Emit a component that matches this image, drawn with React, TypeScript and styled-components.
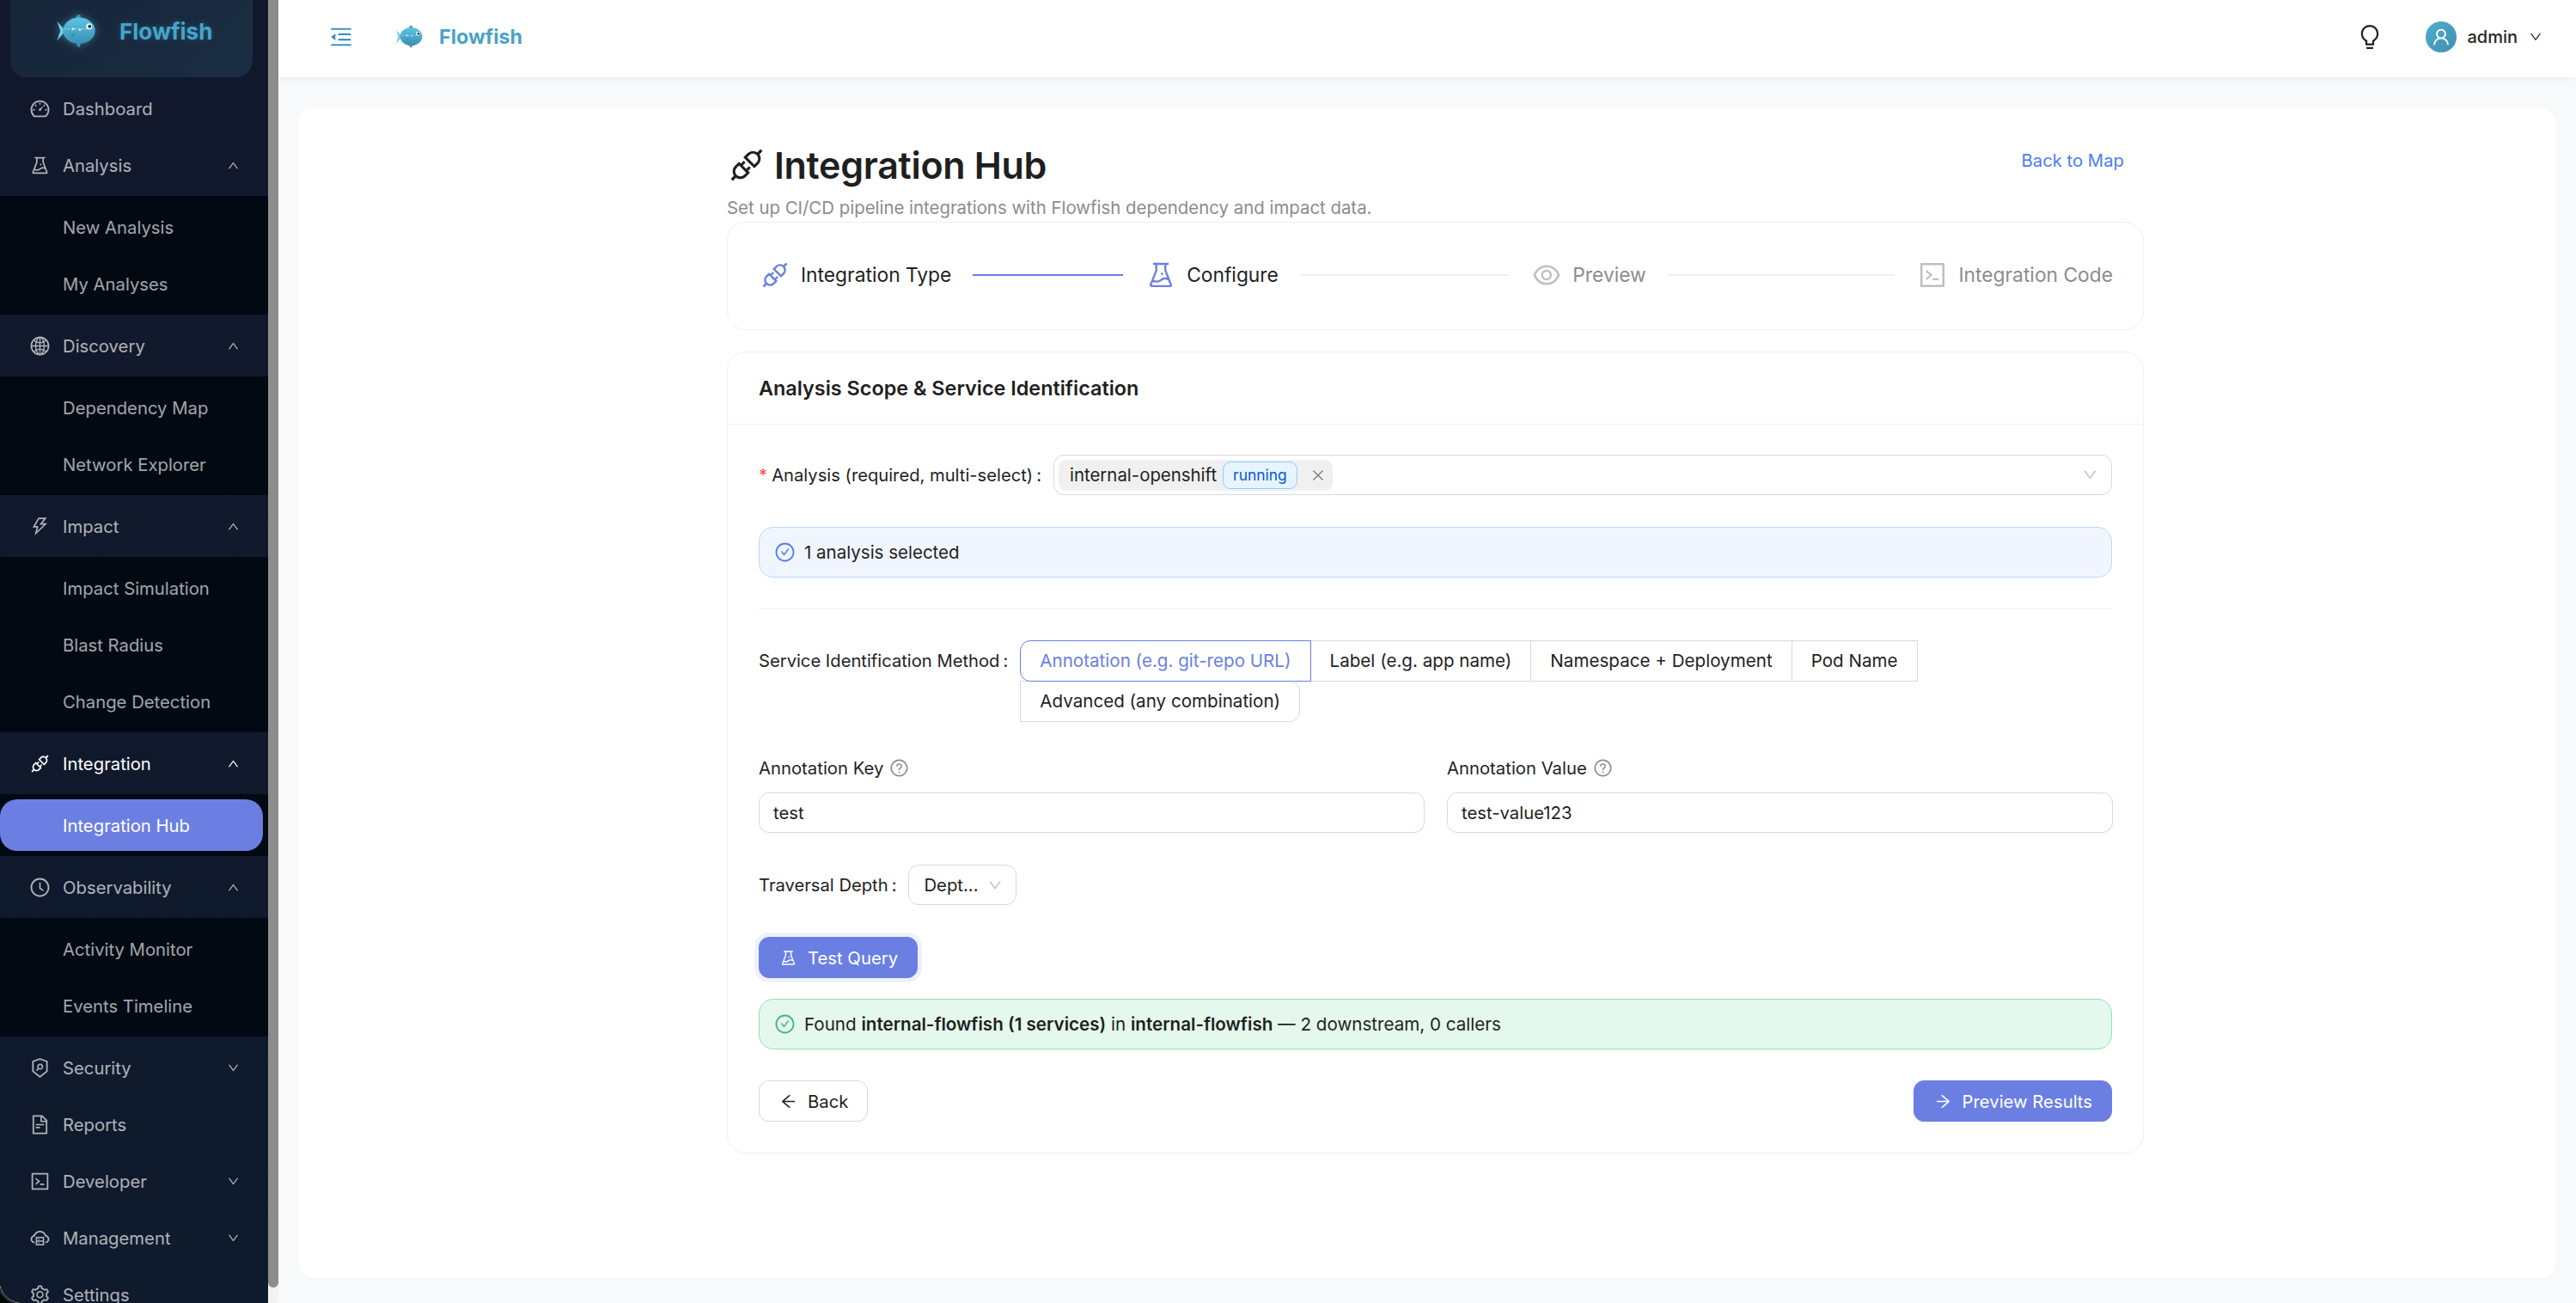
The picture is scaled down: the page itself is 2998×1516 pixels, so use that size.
import React from 'react';
import styled, { createGlobalStyle } from 'styled-components';
import {
  AiOutlineApi,
  AiOutlineArrowLeft,
  AiOutlineArrowRight,
  AiOutlineBulb,
  AiOutlineCheckCircle,
  AiOutlineClockCircle,
  AiOutlineClose,
  AiOutlineCloudServer,
  AiOutlineCode,
  AiOutlineDashboard,
  AiOutlineDown,
  AiOutlineExperiment,
  AiOutlineEye,
  AiOutlineFileText,
  AiOutlineGlobal,
  AiOutlineMenuFold,
  AiOutlineQuestionCircle,
  AiOutlineSecurityScan,
  AiOutlineSetting,
  AiOutlineThunderbolt,
  AiOutlineUp,
  AiOutlineUser,
} from 'react-icons/ai';

const GlobalStyle = createGlobalStyle`
  html, body {
    margin: 0;
    padding: 0;
    height: 100%;
    overflow: hidden;
    background: #f8f9fb;
    font-family: Inter, "Liberation Sans", sans-serif;
    color: #1f1f1f;
  }
  * {
    box-sizing: border-box;
  }
`;

const Shell = styled.div`
  position: relative;
  display: flex;
  height: 100vh;
  overflow: hidden;
`;

const SideColumn = styled.aside`
  display: flex;
  flex: none;
  width: 324px;
  height: 100%;
`;

const SideNav = styled.nav`
  width: 312px;
  height: 100%;
  overflow: hidden;
  background: linear-gradient(180deg, #12182b 0%, #0f1a2d 100%);
`;

const ScrollTrack = styled.div`
  width: 12px;
  height: 100%;
  background: #f2f2f2;
`;

const ScrollThumb = styled.div`
  height: 1498px;
  background: #8c8c8c;
  border-radius: 0 0 6px 6px;
`;

const WindowCorner = styled.svg`
  position: absolute;
  left: 0;
  bottom: 0;
  width: 24px;
  height: 24px;
`;

const Brand = styled.div`
  display: flex;
  align-items: center;
  height: 120px;
  margin: -30px 18px 0 12px;
  padding: 12px 0 0 53px;
  gap: 26px;
  background: linear-gradient(135deg, #172538, #1a2d42);
  border-radius: 20px;
`;

const BrandName = styled.span`
  font-size: 26px;
  font-weight: 700;
  color: #45a5cb;
  text-shadow: 0 0 7px rgba(69, 165, 203, 0.35);
`;

const MenuList = styled.div`
  padding-top: 6px;
`;

const MenuRow = styled.div<{ $active?: boolean }>`
  display: flex;
  align-items: center;
  height: 60px;
  margin-bottom: 6px;
  padding: 0 33px 0 34px;
  font-size: 20.3px;
  color: ${({ $active }) => ($active ? '#ffffff' : 'rgba(255, 255, 255, 0.68)')};

  & > svg:first-child {
    flex: none;
    width: 25px;
    height: 25px;
    margin-right: 14px;
  }
`;

const MenuLabel = styled.span`
  flex: 1;
`;

const Chevron = styled.span`
  display: flex;
  font-size: 15px;
`;

const SubGroup = styled.div`
  display: flex;
  flex-direction: column;
  gap: 6px;
  margin-bottom: 6px;
  padding: 6px 0;
  background: #020913;
`;

const SubRow = styled.div<{ $active?: boolean }>`
  display: flex;
  align-items: center;
  height: 60px;
  margin-right: 6px;
  padding-left: 73px;
  font-size: 20.3px;
  border-radius: 20px;
  background: ${({ $active }) => ($active ? '#6b7fe3' : 'transparent')};
  color: ${({ $active }) => ($active ? '#ffffff' : 'rgba(255, 255, 255, 0.65)')};
`;

const MainColumn = styled.div`
  display: flex;
  flex: 1;
  flex-direction: column;
  min-width: 0;
`;

const TopBar = styled.header`
  display: flex;
  flex: none;
  align-items: center;
  height: 90px;
  padding: 0 39px 5px 58px;
  background: #ffffff;
  box-shadow: 0 1px 6px rgba(0, 0, 0, 0.07);
`;

const FoldIcon = styled.span`
  display: flex;
  margin-right: 48px;
  font-size: 30px;
  color: #3f94b8;
`;

const TopBrandName = styled.span`
  margin-left: 18px;
  font-size: 23.3px;
  font-weight: 700;
  color: #4aa2c7;
`;

const Spacer = styled.div`
  flex: 1;
`;

const BulbIcon = styled.span`
  display: flex;
  margin-right: 49px;
  font-size: 32px;
  color: #222222;
`;

const Avatar = styled.span`
  display: flex;
  align-items: center;
  justify-content: center;
  width: 36px;
  height: 36px;
  margin-right: 12px;
  border-radius: 50%;
  background: linear-gradient(135deg, #52adcd, #3f8fb2);
  color: #ffffff;
  font-size: 24px;
`;

const UserName = styled.span`
  margin-right: 13px;
  font-size: 20px;
  font-weight: 500;
  color: #262626;
`;

const UserChevron = styled.span`
  display: flex;
  font-size: 16px;
  color: #262626;
`;

const ContentArea = styled.main`
  flex: 1;
  margin: 36px 24px 30px 24px;
  padding: 0 479px 0 498px;
  background: #ffffff;
  border-radius: 16px;
`;

const PageHead = styled.div`
  display: flex;
  align-items: flex-start;
  justify-content: space-between;
  height: 132px;
  padding-top: 37px;
`;

const PageTitle = styled.h1`
  display: flex;
  align-items: center;
  gap: 9px;
  margin: 0;
  font-size: 43px;
  line-height: 58px;
  font-weight: 600;
  letter-spacing: -0.3px;
  color: #1f1f1f;

  svg {
    width: 46px;
    height: 46px;
  }
`;

const PageSubtitle = styled.p`
  margin: 6px 0 0;
  font-size: 20.4px;
  line-height: 30px;
  color: #8c8c8c;
`;

const BackLink = styled.a`
  margin: 9px 23px 0 0;
  font-size: 20.3px;
  line-height: 30px;
  color: #4c7cf0;
`;

const Panel = styled.section`
  background: #ffffff;
  border: 1px solid #f0f0f0;
  border-radius: 22px;
`;

const StepperPanel = styled(Panel)`
  display: flex;
  align-items: center;
  height: 126px;
  margin-bottom: 25px;
  padding: 0 35px 2px 37px;
`;

const Step = styled.div<{ $last?: boolean }>`
  display: flex;
  flex: ${({ $last }) => ($last ? 'none' : '1')};
  align-items: center;
`;

const StepIcon = styled.span<{ $on: boolean }>`
  display: flex;
  margin-right: 12px;
  font-size: 36px;
  color: ${({ $on }) => ($on ? '#6b7fe3' : '#bfbfbf')};
`;

const StepTitle = styled.span<{ $on: boolean }>`
  font-size: 22.8px;
  line-height: 34px;
  color: ${({ $on }) => ($on ? '#1f1f1f' : '#8c8c8c')};
`;

const StepLine = styled.span<{ $on: boolean }>`
  flex: 1;
  height: 2px;
  margin: 0 26px 0 25px;
  background: ${({ $on }) => ($on ? '#6b7fe3' : '#f0f0f0')};
`;

const PanelHead = styled.div`
  display: flex;
  align-items: center;
  height: 84px;
  padding: 0 36px;
  border-bottom: 1px solid #f0f0f0;
  font-size: 23.4px;
  font-weight: 600;
  color: #1f1f1f;
`;

const PanelBody = styled.div`
  padding: 35px 36px 36px;
`;

const FormRow = styled.div<{ $gap?: number }>`
  display: flex;
  align-items: flex-start;
  margin-bottom: ${({ $gap }) => $gap ?? 37}px;
`;

const FieldLabel = styled.label`
  flex: none;
  height: 47px;
  margin-right: 14px;
  font-size: 20.2px;
  line-height: 47px;
  color: #1f1f1f;
`;

const Colon = styled.span`
  margin-left: 4px;
`;

const Required = styled.span`
  margin-right: 5px;
  color: #ff4d4f;
`;

const MultiSelect = styled.div`
  display: flex;
  flex: 1;
  align-items: center;
  justify-content: space-between;
  height: 47px;
  padding: 0 15px 0 5px;
  border: 1px solid #d9d9d9;
  border-radius: 12px;
  color: #bfbfbf;
  font-size: 19px;
`;

const Chip = styled.span`
  display: flex;
  align-items: center;
  height: 36px;
  padding: 0 8px 0 13px;
  border-radius: 9px;
  background: #f0f0f0;
  font-size: 20.4px;
  color: #1f1f1f;
`;

const StatusTag = styled.span`
  display: flex;
  align-items: center;
  height: 32px;
  margin: 0 15px 0 7px;
  padding: 0 11px;
  border: 1px solid #91caff;
  border-radius: 9px;
  background: #e6f4ff;
  font-size: 17.4px;
  color: #0958d9;
`;

const ChipClose = styled.span`
  display: flex;
  font-size: 18px;
  color: #7f7f7f;
`;

const Notice = styled.div<{ $tone: 'info' | 'success' }>`
  display: flex;
  align-items: center;
  height: 59px;
  padding: 0 17px;
  border: 1px solid ${({ $tone }) => ($tone === 'info' ? '#bcd7fa' : '#92e0b5')};
  border-radius: 17px;
  background: ${({ $tone }) => ($tone === 'info' ? '#f1f6fe' : '#e4f8ed')};
  font-size: 20.5px;
  color: #1f1f1f;

  svg {
    flex: none;
    width: 25px;
    height: 25px;
    margin-right: 10px;
    color: ${({ $tone }) => ($tone === 'info' ? '#4c7cf0' : '#45b585')};
  }

  b {
    font-weight: 600;
  }
`;

const InfoNotice = styled(Notice)`
  margin-bottom: 36px;
`;

const SuccessNotice = styled(Notice)`
  margin-bottom: 36px;
  font-size: 20.6px;
`;

const Divider = styled.hr`
  height: 1px;
  margin: 0 0 36px;
  border: 0;
  background: #f0f0f0;
`;

const RadioGroup = styled.div`
  display: flex;
  flex-wrap: wrap;
  width: 1060px;
`;

const RadioOption = styled.span<{ $on?: boolean; $shape?: 'first' | 'last' }>`
  position: relative;
  z-index: ${({ $on }) => ($on ? 1 : 0)};
  height: 48px;
  margin: 0 -1px -1px 0;
  padding: 0 22px;
  border: 1px solid ${({ $on }) => ($on ? '#6b7fe3' : '#d9d9d9')};
  border-radius: ${({ $shape }) =>
    $shape === 'first' ? '12px 0 0 12px' : $shape === 'last' ? '0 12px 12px 0' : '0'};
  background: #ffffff;
  font-size: 20.6px;
  line-height: 46px;
  white-space: nowrap;
  color: ${({ $on }) => ($on ? '#6b7fe3' : '#1f1f1f')};
`;

const TwoColumns = styled.div`
  display: grid;
  grid-template-columns: 775px 775px;
  gap: 26px;
  margin: 41px 0 37px;
`;

const StackedLabel = styled.div`
  display: flex;
  align-items: center;
  gap: 7px;
  height: 28px;
  margin-bottom: 14px;
  padding-bottom: 2px;
  font-size: 20.3px;
  color: #1f1f1f;

  svg {
    color: #8c8c8c;
    font-size: 23px;
  }
`;

const TextInput = styled.div`
  display: flex;
  align-items: center;
  height: 47px;
  padding: 0 16px;
  border: 1px solid #d9d9d9;
  border-radius: 12px;
  font-size: 20.3px;
  color: #1f1f1f;
`;

const DepthSelect = styled.div`
  display: flex;
  align-items: center;
  justify-content: space-between;
  width: 126px;
  height: 47px;
  padding: 0 15px 0 17px;
  border: 1px solid #d9d9d9;
  border-radius: 12px;
  font-size: 20.3px;
  color: #1f1f1f;

  svg {
    font-size: 18px;
    color: #bfbfbf;
  }
`;

const Button = styled.button<{ $primary?: boolean; $halo?: boolean }>`
  display: inline-flex;
  align-items: center;
  gap: 12px;
  height: 48px;
  padding: 0 22px 0 23px;
  border: 1px solid ${({ $primary }) => ($primary ? '#6b7fe3' : '#d9d9d9')};
  border-radius: 12px;
  background: ${({ $primary }) => ($primary ? '#6b7fe3' : '#ffffff')};
  color: ${({ $primary }) => ($primary ? '#ffffff' : '#1f1f1f')};
  font-family: inherit;
  font-size: 20.3px;
  box-shadow: ${({ $halo }) =>
    $halo ? '0 0 0 5px #eef1fd' : '0 2px 0 rgba(0, 0, 0, 0.02)'};

  svg {
    font-size: 21px;
  }
`;

const TestRow = styled.div`
  margin-bottom: 24px;
`;

const ActionRow = styled.div`
  display: flex;
  justify-content: space-between;
`;

const FishLogo: React.FC<{ size: number; id: string; glow?: boolean }> = ({ size, id, glow }) => (
  <svg
    width={size}
    height={size * 0.82}
    viewBox="0 0 48 40"
    style={glow ? { filter: 'drop-shadow(0 0 5px rgba(75, 175, 215, 0.55))' } : undefined}
  >
    <defs>
      <linearGradient id={id} x1="0" y1="0" x2="0" y2="1">
        <stop offset="0" stopColor="#5cc4e2" />
        <stop offset="1" stopColor="#3a8fb4" />
      </linearGradient>
    </defs>
    <path d="M23 5 C24 1 27 0 29 2 L29 6 Z" fill="#3f93b7" />
    <path d="M24 34 C24 38 26 40 28 39 L29 34 Z" fill="#3f93b7" />
    <path d="M11 20 L1 9 L5 20 L1 32 Z" fill="#6fcde8" />
    <ellipse cx="27" cy="20" rx="19" ry="15.5" fill={`url(#${id})`} />
    <path d="M10 18 H38" stroke="#cfeef8" strokeWidth="0.9" strokeDasharray="2 2" fill="none" />
    <circle cx="20" cy="18" r="1.4" fill="#d8f2fa" />
    <circle cx="28" cy="19" r="1.2" fill="#d8f2fa" />
    <path d="M18 27 L22 23" stroke="#2f7fa3" strokeWidth="1.4" />
    <circle cx="39" cy="15" r="3.6" fill="#ffffff" />
    <circle cx="39.6" cy="15" r="2" fill="#17384a" />
  </svg>
);

type SubItem = { label: string; active?: boolean };
type NavItem = {
  label: string;
  icon: React.ReactNode;
  open?: boolean;
  closed?: boolean;
  active?: boolean;
  children?: SubItem[];
};

const navItems: NavItem[] = [
  { label: 'Dashboard', icon: <AiOutlineDashboard /> },
  {
    label: 'Analysis',
    icon: <AiOutlineExperiment />,
    open: true,
    children: [{ label: 'New Analysis' }, { label: 'My Analyses' }],
  },
  {
    label: 'Discovery',
    icon: <AiOutlineGlobal />,
    open: true,
    children: [{ label: 'Dependency Map' }, { label: 'Network Explorer' }],
  },
  {
    label: 'Impact',
    icon: <AiOutlineThunderbolt />,
    open: true,
    children: [{ label: 'Impact Simulation' }, { label: 'Blast Radius' }, { label: 'Change Detection' }],
  },
  {
    label: 'Integration',
    icon: <AiOutlineApi />,
    open: true,
    active: true,
    children: [{ label: 'Integration Hub', active: true }],
  },
  {
    label: 'Observability',
    icon: <AiOutlineClockCircle />,
    open: true,
    children: [{ label: 'Activity Monitor' }, { label: 'Events Timeline' }],
  },
  { label: 'Security', icon: <AiOutlineSecurityScan />, closed: true },
  { label: 'Reports', icon: <AiOutlineFileText /> },
  { label: 'Developer', icon: <AiOutlineCode />, closed: true },
  { label: 'Management', icon: <AiOutlineCloudServer />, closed: true },
  { label: 'Settings', icon: <AiOutlineSetting /> },
];

const steps = [
  { title: 'Integration Type', icon: <AiOutlineApi />, on: true, line: true },
  { title: 'Configure', icon: <AiOutlineExperiment />, on: true, line: false },
  { title: 'Preview', icon: <AiOutlineEye />, on: false, line: false },
  { title: 'Integration Code', icon: <AiOutlineCode />, on: false, line: false },
];

const Sidebar: React.FC = () => (
  <SideColumn>
    <SideNav>
      <Brand>
        <FishLogo size={48} id="fish-side" glow />
        <BrandName>Flowfish</BrandName>
      </Brand>
      <MenuList>
        {navItems.map((item) => (
          <React.Fragment key={item.label}>
            <MenuRow $active={item.active}>
              {item.icon}
              <MenuLabel>{item.label}</MenuLabel>
              {item.open && (
                <Chevron>
                  <AiOutlineUp />
                </Chevron>
              )}
              {item.closed && (
                <Chevron>
                  <AiOutlineDown />
                </Chevron>
              )}
            </MenuRow>
            {item.children && (
              <SubGroup>
                {item.children.map((child) => (
                  <SubRow key={child.label} $active={child.active}>
                    {child.label}
                  </SubRow>
                ))}
              </SubGroup>
            )}
          </React.Fragment>
        ))}
      </MenuList>
    </SideNav>
    <ScrollTrack>
      <ScrollThumb />
    </ScrollTrack>
  </SideColumn>
);

const Header: React.FC = () => (
  <TopBar>
    <FoldIcon>
      <AiOutlineMenuFold />
    </FoldIcon>
    <FishLogo size={33} id="fish-top" />
    <TopBrandName>Flowfish</TopBrandName>
    <Spacer />
    <BulbIcon>
      <AiOutlineBulb />
    </BulbIcon>
    <Avatar>
      <AiOutlineUser />
    </Avatar>
    <UserName>admin</UserName>
    <UserChevron>
      <AiOutlineDown />
    </UserChevron>
  </TopBar>
);

const App: React.FC = () => (
  <Shell>
    <GlobalStyle />
    <Sidebar />
    <MainColumn>
      <Header />
      <ContentArea>
        <PageHead>
          <div>
            <PageTitle>
              <AiOutlineApi />
              Integration Hub
            </PageTitle>
            <PageSubtitle>Set up CI/CD pipeline integrations with Flowfish dependency and impact data.</PageSubtitle>
          </div>
          <BackLink>Back to Map</BackLink>
        </PageHead>

        <StepperPanel>
          {steps.map((step, index) => (
            <Step key={step.title} $last={index === steps.length - 1}>
              <StepIcon $on={step.on}>{step.icon}</StepIcon>
              <StepTitle $on={step.on}>{step.title}</StepTitle>
              {index < steps.length - 1 && <StepLine $on={step.line} />}
            </Step>
          ))}
        </StepperPanel>

        <Panel>
          <PanelHead>Analysis Scope &amp; Service Identification</PanelHead>
          <PanelBody>
            <FormRow>
              <FieldLabel>
                <Required>*</Required>
                Analysis (required, multi-select)
                <Colon>:</Colon>
              </FieldLabel>
              <MultiSelect>
                <Chip>
                  internal-openshift
                  <StatusTag>running</StatusTag>
                  <ChipClose>
                    <AiOutlineClose />
                  </ChipClose>
                </Chip>
                <AiOutlineDown />
              </MultiSelect>
            </FormRow>

            <InfoNotice $tone="info">
              <AiOutlineCheckCircle />1 analysis selected
            </InfoNotice>

            <Divider />

            <FormRow $gap={0}>
              <FieldLabel>
                Service Identification Method
                <Colon>:</Colon>
              </FieldLabel>
              <RadioGroup>
                <RadioOption $on $shape="first">
                  Annotation (e.g. git-repo URL)
                </RadioOption>
                <RadioOption>Label (e.g. app name)</RadioOption>
                <RadioOption>Namespace + Deployment</RadioOption>
                <RadioOption>Pod Name</RadioOption>
                <RadioOption $shape="last">Advanced (any combination)</RadioOption>
              </RadioGroup>
            </FormRow>

            <TwoColumns>
              <div>
                <StackedLabel>
                  Annotation Key
                  <AiOutlineQuestionCircle />
                </StackedLabel>
                <TextInput>test</TextInput>
              </div>
              <div>
                <StackedLabel>
                  Annotation Value
                  <AiOutlineQuestionCircle />
                </StackedLabel>
                <TextInput>test-value123</TextInput>
              </div>
            </TwoColumns>

            <FormRow>
              <FieldLabel>
                Traversal Depth
                <Colon>:</Colon>
              </FieldLabel>
              <DepthSelect>
                Dept...
                <AiOutlineDown />
              </DepthSelect>
            </FormRow>

            <TestRow>
              <Button $primary $halo>
                <AiOutlineExperiment />
                Test Query
              </Button>
            </TestRow>

            <SuccessNotice $tone="success">
              <AiOutlineCheckCircle />
              <span>
                Found <b>internal-flowfish (1 services)</b> in <b>internal-flowfish</b> — 2 downstream, 0 callers
              </span>
            </SuccessNotice>

            <ActionRow>
              <Button>
                <AiOutlineArrowLeft />
                Back
              </Button>
              <Button $primary>
                <AiOutlineArrowRight />
                Preview Results
              </Button>
            </ActionRow>
          </PanelBody>
        </Panel>
      </ContentArea>
    </MainColumn>
    <WindowCorner viewBox="0 0 24 24">
      <path d="M0 4 C2 14 10 22 22 24 H0 Z" fill="#050505" />
      <path d="M0 4 C2 14 10 22 22 24" stroke="#8a8a8a" strokeWidth="1" fill="none" />
      <path d="M0 10 C3 16 8 21 15 24" stroke="#4a4a4a" strokeWidth="1" fill="none" />
    </WindowCorner>
  </Shell>
);

export default App;
